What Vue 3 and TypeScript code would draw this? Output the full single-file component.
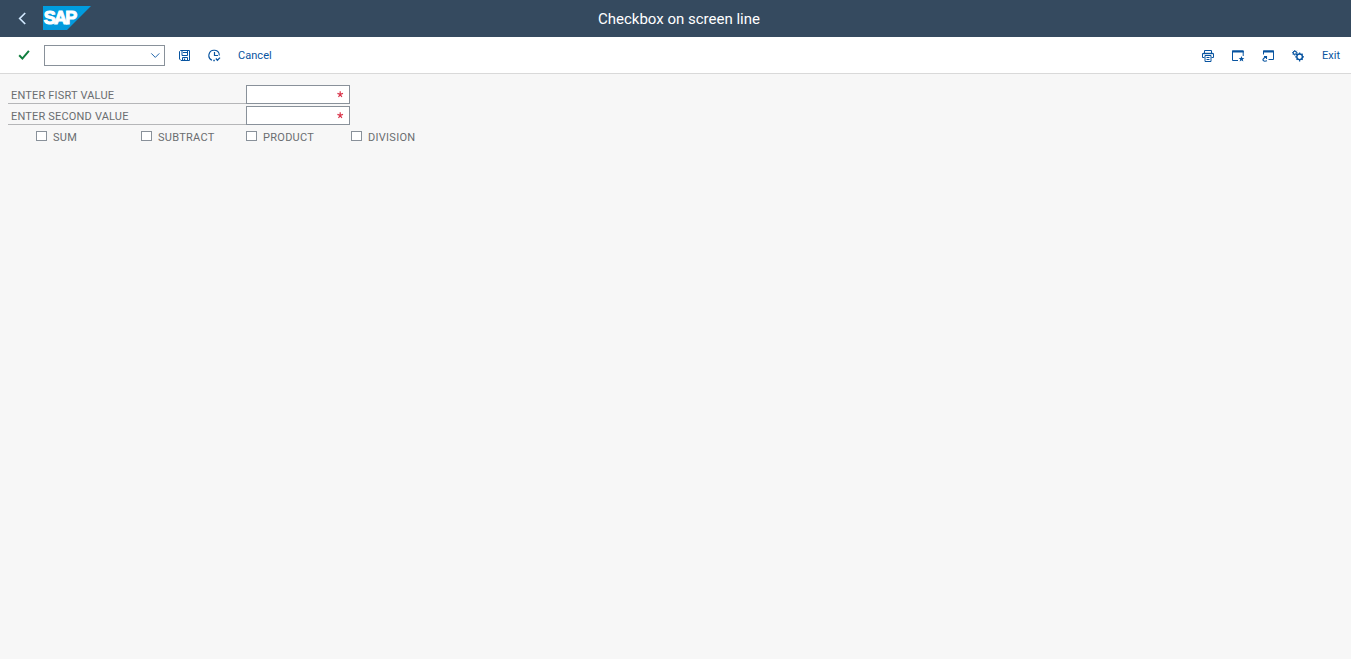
<script setup lang="ts">
import { ref } from 'vue'

interface Field { label: string; value: string }

const command = ref('')
const fields = ref<Field[]>([
  { label: 'ENTER FISRT VALUE', value: '' },
  { label: 'ENTER SECOND VALUE', value: '' },
])
const options = ref([
  { label: 'SUM', checked: false },
  { label: 'SUBTRACT', checked: false },
  { label: 'PRODUCT', checked: false },
  { label: 'DIVISION', checked: false },
])
</script>

<template>
  <div class="window">
    <header class="shell">
      <button class="back" aria-label="Back">
        <svg width="8" height="14" viewBox="0 0 8 14"><path d="M7.2 1 1.7 6.5 7.2 12" fill="none" stroke="#d1e8ff" stroke-width="1.7" /></svg>
      </button>
      <svg class="logo" width="48" height="24" viewBox="0 0 48 24">
        <defs>
          <linearGradient id="brand" x1="0" y1="0" x2="0" y2="1">
            <stop offset="0" stop-color="#009de0" /><stop offset="1" stop-color="#0499dc" />
          </linearGradient>
        </defs>
        <path d="M0 0H48L24 24H0Z" fill="url(#brand)" />
        <text x="0.8" y="18" textLength="33.5" lengthAdjust="spacing" class="logo-text">SAP</text>
      </svg>
      <h1 class="title">Checkbox on screen line</h1>
    </header>

    <nav class="toolbar">
      <button class="icon accept" aria-label="Enter">
        <svg width="12" height="12" viewBox="0 0 12 12"><path d="M1.2 6.2 4.4 9.6 10.9 1.8" fill="none" stroke="#107e3e" stroke-width="2" /></svg>
      </button>
      <div class="combo">
        <input v-model="command" aria-label="Command" />
        <svg width="10" height="6" viewBox="0 0 10 6"><path d="M1.3 1.4 5.3 5.4 9.3 1.4" fill="none" stroke="#0854a0" stroke-width=".9" /></svg>
      </div>
      <button class="icon save" aria-label="Save">
        <svg width="12" height="12" viewBox="0 0 12 12" fill="none" stroke="#0854a0">
          <path d="M1.5.5H10.5V10.5H2L.5 9V1.5Z M3 .5V5.5H8.5V.5 M3.5 10.5V7.5H8.5V10.5 M4 2.5H8" /><path d="M5.5 8.5V10.5" stroke-width="1.3" />
        </svg>
      </button>
      <button class="icon execute" aria-label="Execute">
        <svg width="13" height="13" viewBox="0 0 13 13" fill="none" stroke="#0854a0">
          <path d="M4 11.2A5.2 5.2 0 1 1 11.3 6.5" stroke-width="1.1" /><path d="M6.5 3V6.5H10" stroke-width="1.2" /><path d="M5.3 11.5H6.8M7.9 9.5 9.4 11.3 12 8.6" stroke-width="1.3" />
        </svg>
      </button>
      <button class="text cancel">Cancel</button>
      <span class="spacer"></span>
      <button class="icon print" aria-label="Print">
        <svg width="12" height="12" viewBox="0 0 12 12" fill="none" stroke="#0854a0">
          <path d="M2.5 3V.5H9.5V3M2.5 7.5H.5V3.5H11.5V7.5H9.5" /><path d="M1 3.5H11" stroke-width="1.4" /><path d="M3 5.5H9V11.5H3Z" /><path d="M4.5 7.5H7.5M4.5 9.5H7.5" />
        </svg>
      </button>
      <button class="icon session" aria-label="New session">
        <svg width="13" height="12" viewBox="0 0 13 12" fill="none" stroke="#0854a0">
          <path d="M6 10.5H.5V1H11.2V6" /><path d="M0 1.5H11.7" stroke-width="2" /><path d="m9.5 6 .8 1.9 2.1.1-1.6 1.3.5 2.1-1.8-1.1-1.8 1.1.5-2.1L6.6 8l2.1-.1Z" fill="#0854a0" stroke="none" />
        </svg>
      </button>
      <button class="icon shortcut" aria-label="Create shortcut">
        <svg width="13" height="12" viewBox="0 0 13 12" fill="none" stroke="#0854a0">
          <path d="M1.5 4.5V1H11.5V9.5H6.5" /><path d="M1 1.5H12" stroke-width="2" /><path d="M2 6.5H4.5V9M4.2 6.8C1.5 8 .2 9.7 1.4 10.7 2.3 11.5 3.8 11.2 5 10.8" stroke-width="1.1" />
        </svg>
      </button>
      <button class="icon settings" aria-label="Settings">
        <svg width="13" height="12" viewBox="0 0 13 12" fill="none" stroke="#0854a0">
          <circle cx="2.8" cy="2.8" r="1.6" stroke-width="1.1" /><path d="M2.8 0V1M2.8 4.6V5.6M0 2.8H1M4.6 2.8H5.6M.9.9 1.6 1.6M4 4 5 5M4.8.8 4 1.6M1.6 4 .9 4.8" />
          <circle cx="7.6" cy="6.8" r="2.8" stroke-width="1.4" /><path d="M7.6 2.4V4M7.6 9.8V11.4M3.2 6.8H4.8M10.4 6.8H12M4.6 3.8 5.6 4.8M9.6 8.8 10.6 9.8M10.6 3.8 9.6 4.8M5.6 8.8 4.6 9.8" stroke-width="1.3" />
        </svg>
      </button>
      <button class="text exit">Exit</button>
    </nav>

    <main class="content">
      <label v-for="field in fields" :key="field.label" class="field">
        <span class="field-label"><span class="caption">{{ field.label }}</span></span>
        <span class="entry">
          <input v-model="field.value" required />
          <svg width="7" height="7" viewBox="0 0 7 7"><path d="M3.2 .2V3.4M.4 2.4 3.2 3.4 6 2.4M1.5 6 3.2 3.4 4.9 6" fill="none" stroke="#d9364c" stroke-width="1.2" /></svg>
        </span>
      </label>
      <div class="options">
        <label v-for="option in options" :key="option.label" class="option">
          <input v-model="option.checked" type="checkbox" /><span>{{ option.label }}</span>
        </label>
      </div>
    </main>
  </div>
</template>

<style>
body { background: #fff; }
</style>

<style scoped>
* { box-sizing: border-box; }
.window { width: 1351px; height: 659px; background: #f7f7f7; font-family: Roboto, "Liberation Sans", sans-serif; font-size: 11px; }
button { border: 0; padding: 0; background: none; font: inherit; display: flex; flex: none; }
svg { display: block; flex: none; }
.shell { height: 37px; background: #354a5f; display: flex; align-items: center; padding-left: 18px; }
.back { width: 25px; }
.logo { margin-top: -1px; }
.logo-text { font: bold 18px "Liberation Sans", sans-serif; fill: #fff; stroke: #fff; stroke-width: 1px; }
.title { margin: 1px 0 0 507px; font-size: 15px; line-height: 20px; font-weight: 400; color: #fff; white-space: nowrap; }
.toolbar { height: 37px; background: #fff; border-bottom: 1px solid #d9d9d9; display: flex; align-items: center; padding-left: 18px; }
.combo { width: 121px; height: 21px; margin-left: 14px; border: 1px solid #89919a; display: flex; align-items: center; padding-right: 4px; }
.combo input, .entry input { flex: 1; min-width: 0; border: 0; outline: 0; padding: 0 3px; height: 100%; background: transparent; font: inherit; }
.save { margin-left: 14px; padding-top: 1px; }
.execute { margin-left: 17px; padding-top: 1px; }
.text { color: #0854a0; line-height: 16px; padding-top: 2px; }
.cancel { margin-left: 17px; letter-spacing: .05px; }
.spacer { flex: 1; }
.print, .session, .shortcut, .settings { width: 30px; padding-top: 1px; }
.exit { width: 29px; }
.content { padding: 11px 8px 0; color: #6a6d70; }
.field { display: flex; width: 342px; height: 19px; margin-bottom: 2px; }
.field-label { width: 238px; border-bottom: 1px solid #b5b6b8; padding: 1px 3px 0; line-height: 19px; white-space: nowrap; letter-spacing: .18px; }
.entry { width: 104px; border: 1px solid #89919a; background: #fff; display: flex; align-items: center; padding-right: 5px; }
.options { display: flex; padding-left: 28px; height: 19px; }
.option { width: 105px; display: flex; align-items: center; letter-spacing: .28px; }
.option input { appearance: none; width: 11px; height: 10px; margin: -1px 6px 0 0; border: 1px solid #89919a; background: #fff; flex: none; }
.option span { line-height: 19px; padding-top: 1px; }
</style>
